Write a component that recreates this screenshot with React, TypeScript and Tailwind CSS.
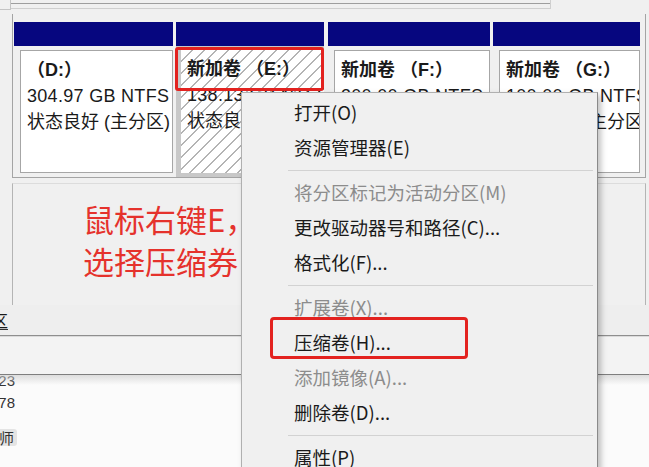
import React from "react";

type Item = { t: string; dis?: boolean } | "sep";

const items: Item[] = [
  { t: "打开(O)" },
  { t: "资源管理器(E)" },
  "sep",
  { t: "将分区标记为活动分区(M)", dis: true },
  { t: "更改驱动器号和路径(C)..." },
  { t: "格式化(F)..." },
  "sep",
  { t: "扩展卷(X)...", dis: true },
  { t: "压缩卷(H)..." },
  { t: "添加镜像(A)...", dis: true },
  { t: "删除卷(D)..." },
  "sep",
  { t: "属性(P)" },
];

function VolumeText({ label, size }: { label: string; size: string }) {
  return (
    <div className="pt-[6px] pl-[6px] leading-[26px] text-[18px] text-[#1a1a1a] whitespace-nowrap overflow-hidden">
      <div className="font-bold">{label}</div>
      <div className="tracking-[0.3px]">{size}</div>
      <div>状态良好 (主分区)</div>
    </div>
  );
}

export default function App() {
  return (
    <div className="relative w-[649px] h-[467px] overflow-hidden bg-[#f0f0f0] font-['Liberation_Sans','Noto_Sans_CJK_SC',sans-serif] flex flex-col">
      {/* top strip */}
      <div className="h-[14px] flex shrink-0">
        <div className="w-[11px] h-[10px] border-r border-b border-[#c4c4c4]" />
        <div className="w-[540px] h-[9px] border-b border-r border-[#cfcfcf]">
          <div className="h-[4px] border-b border-[#9e9e9e]" />
        </div>
      </div>

      {/* disk row */}
      <div className="ml-[12px] w-[634px] shrink-0 border-l border-r border-b border-[#a4a4a4] pl-px pt-[8px] flex">
        {/* D */}
        <div className="w-[159px] flex flex-col">
          <div className="h-[24px] bg-[#06067f]" />
          <div className="pt-[4px] pl-[6px] pb-[4px]">
            <div className="h-[123px] bg-white border border-[#a6a6a6]">
              <VolumeText label="（D:）" size="304.97 GB NTFS" />
            </div>
          </div>
        </div>
        {/* E */}
        <div className="ml-[3px] w-[148px] flex flex-col">
          <div className="h-[24px] bg-[#06067f]" />
          <div className="pt-[4px] pl-[5px] pb-[4px] bg-[#c8c8c8]">
            <div className="h-[123px] bg-white bg-[image:repeating-linear-gradient(135deg,#ffffff_0px,#ffffff_7.5px,#b4b4b4_7.5px,#b4b4b4_8.5px)]">
              <VolumeText label="新加卷 （E:）" size="138.13 GB NTFS" />
            </div>
          </div>
        </div>
        {/* F */}
        <div className="ml-[4px] w-[162px] flex flex-col">
          <div className="h-[24px] bg-[#06067f]" />
          <div className="pt-[4px] pl-[6px] pb-[4px]">
            <div className="h-[123px] bg-white border border-[#a6a6a6]">
              <VolumeText label="新加卷 （F:）" size="300.00 GB NTFS" />
            </div>
          </div>
        </div>
        {/* G */}
        <div className="ml-[3px] w-[147px] flex flex-col">
          <div className="h-[24px] bg-[#06067f]" />
          <div className="pt-[4px] pl-[6px] pb-[4px]">
            <div className="h-[123px] bg-white border border-[#a6a6a6]">
              <VolumeText label="新加卷 （G:）" size="100.00 GB NTFS" />
            </div>
          </div>
        </div>
      </div>

      {/* second disk row frame with annotation */}
      <div className="mt-[5px] ml-[12px] w-[634px] h-[122px] shrink-0 border-l border-r border-t border-[#b4b4b4] border-t-[#dcdcdc] pt-[14px] pl-[70px]">
        <div className="text-[31px] leading-[42px] text-[#e5322c] whitespace-nowrap font-['Noto_Sans_CJK_SC',sans-serif]">
          <div>鼠标右键E，</div>
          <div>选择压缩券</div>
        </div>
      </div>

      {/* legend bands */}
      <div className="h-[31px] shrink-0 bg-[#eeeeee] border-b border-[#8e8e8e] flex items-center">
        <span className="-ml-[40px] text-[16px] text-[#1a1a1a] border-b border-[#333] leading-[18px] whitespace-nowrap font-['Noto_Sans_CJK_SC',sans-serif]">
          主分区
        </span>
      </div>
      <div className="h-[39px] shrink-0 bg-[#f3f3f3] border-t border-[#dadada] border-b border-b-[#7e7e7e]" />

      {/* list area */}
      <div className="relative flex-1 bg-[#fbfbfb] text-[15px] text-[#333] leading-[22px]">
        <div className="-ml-[10px] -mt-[5px]">
          <div className="h-[22px] whitespace-nowrap">123</div>
          <div className="h-[22px] whitespace-nowrap">178</div>
        </div>
        <div className="mt-[15px] -ml-[19px] inline-block bg-[#e4e4e4] rounded-[3px] px-[3px] leading-[17px] whitespace-nowrap font-['Noto_Sans_CJK_SC',sans-serif]">
          老师
        </div>
        <div className="absolute left-0 right-0 top-0 h-[10px] bg-gradient-to-b from-[#d0d0d0]/70 to-[#fbfbfb]/0" />
      </div>

      {/* red highlight on E label */}
      <div className="absolute left-[175px] top-[47px] w-[149px] h-[44px] border-[3px] border-[#e3221f] rounded-[3px]" />

      {/* context menu */}
      <div className="absolute left-[241px] top-[92px] w-[357px] h-[400px] bg-[#f0f0f0] border border-[#b0b0b0] border-r-[#8a8a8a] shadow-[3px_3px_6px_rgba(0,0,0,0.25)] pt-[2px] text-[18.5px] font-['Noto_Sans_CJK_SC',sans-serif]">
        {items.map((it, i) =>
          it === "sep" ? (
            <div key={i} className="h-[10px] flex items-center pl-[46px] pr-[4px]">
              <div className="h-px w-full bg-[#d2d2d2]" />
            </div>
          ) : (
            <div
              key={i}
              className={`h-[35px] flex items-center pl-[52px] whitespace-nowrap ${
                it.dis ? "text-[#8c8c8c]" : "text-[#1a1a1a]"
              }`}
            >
              {it.t}
            </div>
          )
        )}
      </div>

      {/* red highlight on 压缩卷 */}
      <div className="absolute left-[270px] top-[317px] w-[198px] h-[42px] border-[3px] border-[#e3221f] rounded-[4px]" />
    </div>
  );
}
